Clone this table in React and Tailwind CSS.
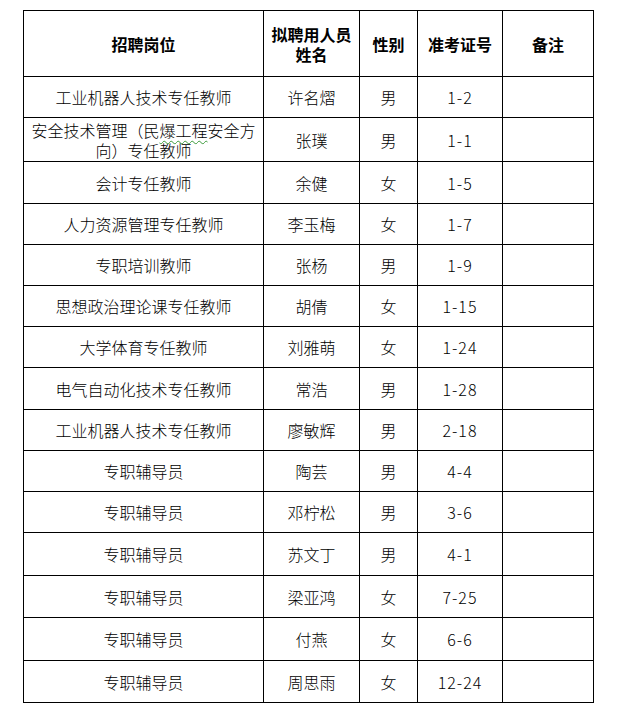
import React from "react";

const rows = [
  { post: "工业机器人技术专任教师", name: "许名熠", sex: "男", no: "1-2", h: "h-[41px]" },
  { post: "wrap", name: "张璞", sex: "男", no: "1-1", h: "h-[44px]" },
  { post: "会计专任教师", name: "余健", sex: "女", no: "1-5", h: "h-[42px]" },
  { post: "人力资源管理专任教师", name: "李玉梅", sex: "女", no: "1-7", h: "h-[41px]" },
  { post: "专职培训教师", name: "张杨", sex: "男", no: "1-9", h: "h-[41px]" },
  { post: "思想政治理论课专任教师", name: "胡倩", sex: "女", no: "1-15", h: "h-[41px]" },
  { post: "大学体育专任教师", name: "刘雅萌", sex: "女", no: "1-24", h: "h-[41px]" },
  { post: "电气自动化技术专任教师", name: "常浩", sex: "男", no: "1-28", h: "h-[42px]" },
  { post: "工业机器人技术专任教师", name: "廖敏辉", sex: "男", no: "2-18", h: "h-[41px]" },
  { post: "专职辅导员", name: "陶芸", sex: "男", no: "4-4", h: "h-[41px]" },
  { post: "专职辅导员", name: "邓柠松", sex: "男", no: "3-6", h: "h-[41px]" },
  { post: "专职辅导员", name: "苏文丁", sex: "男", no: "4-1", h: "h-[43px]" },
  { post: "专职辅导员", name: "梁亚鸿", sex: "女", no: "7-25", h: "h-[42px]" },
  { post: "专职辅导员", name: "付燕", sex: "女", no: "6-6", h: "h-[43px]" },
  { post: "专职辅导员", name: "周思雨", sex: "女", no: "12-24", h: "h-[42px]" },
];

const cell = "border border-black p-0 text-center align-middle";

export default function App() {
  return (
    <div className="min-h-[722px] w-[624px] bg-white pl-[23px] pt-[10px] text-[16px] leading-[20px] text-black font-['Noto_Sans_CJK_SC','Liberation_Sans',sans-serif]">
      <table className="w-[570px] table-fixed border-collapse border border-black">
        <colgroup>
          <col className="w-[240px]" />
          <col className="w-[96px]" />
          <col className="w-[58px]" />
          <col className="w-[85px]" />
          <col className="w-[91px]" />
        </colgroup>
        <thead>
          <tr className="h-[66px] font-bold">
            <th className={cell}>招聘岗位</th>
            <th className={cell}>
              拟聘用人员
              <br />
              姓名
            </th>
            <th className={cell}>性别</th>
            <th className={cell}>准考证号</th>
            <th className={cell}>备注</th>
          </tr>
        </thead>
        <tbody className="font-light">
          {rows.map((r, i) => (
            <tr key={i} className={r.h}>
              <td className={cell}>
                {r.post === "wrap" ? (
                  <>
                    安全技术管理（民
                    <span className="underline decoration-wavy decoration-[#3a9a3a] decoration-1 underline-offset-[3px]">
                      爆工程
                    </span>
                    安全方
                    <br />
                    向）专任教师
                  </>
                ) : (
                  r.post
                )}
              </td>
              <td className={cell}>{r.name}</td>
              <td className={cell}>{r.sex}</td>
              <td className={`${cell} tracking-[1px]`}>{r.no}</td>
              <td className={cell}></td>
            </tr>
          ))}
        </tbody>
      </table>
    </div>
  );
}
